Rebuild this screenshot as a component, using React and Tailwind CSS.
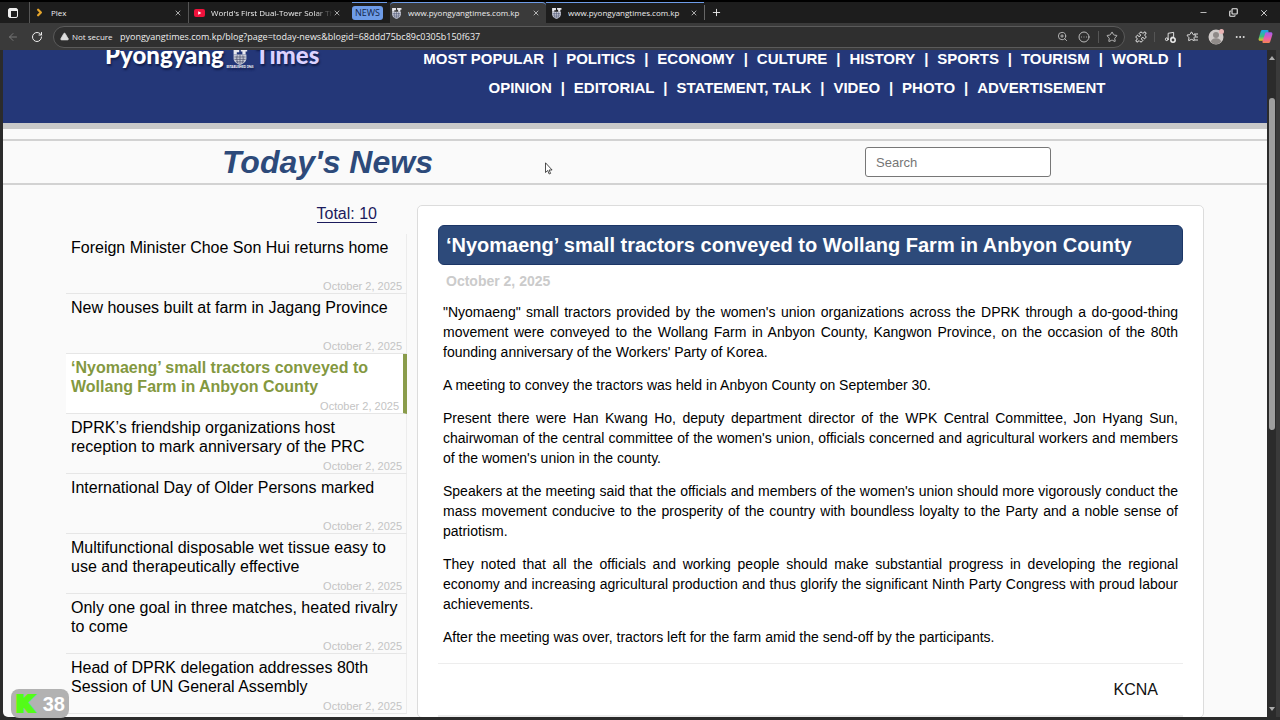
import { useState } from "react"
import {
  ArrowLeft, RotateCw, TriangleAlert, ZoomIn, CircleEllipsis, Star, Puzzle, Music, Ellipsis,
  X, Plus, Minus, Copy, ChevronRight,
} from "lucide-react"

const NAV_ROWS = [
  ["MOST POPULAR", "POLITICS", "ECONOMY", "CULTURE", "HISTORY", "SPORTS", "TOURISM", "WORLD"],
  ["OPINION", "EDITORIAL", "STATEMENT, TALK", "VIDEO", "PHOTO", "ADVERTISEMENT"],
]

const NEWS = [
  "Foreign Minister Choe Son Hui returns home",
  "New houses built at farm in Jagang Province",
  "‘Nyomaeng’ small tractors conveyed to Wollang Farm in Anbyon County",
  "DPRK’s friendship organizations host reception to mark anniversary of the PRC",
  "International Day of Older Persons marked",
  "Multifunctional disposable wet tissue easy to use and therapeutically effective",
  "Only one goal in three matches, heated rivalry to come",
  "Head of DPRK delegation addresses 80th Session of UN General Assembly",
]

const PARAGRAPHS = [
  "\"Nyomaeng\" small tractors provided by the women's union organizations across the DPRK through a do-good-thing movement were conveyed to the Wollang Farm in Anbyon County, Kangwon Province, on the occasion of the 80th founding anniversary of the Workers' Party of Korea.",
  "A meeting to convey the tractors was held in Anbyon County on September 30.",
  "Present there were Han Kwang Ho, deputy department director of the WPK Central Committee, Jon Hyang Sun, chairwoman of the central committee of the women's union, officials concerned and agricultural workers and members of the women's union in the county.",
  "Speakers at the meeting said that the officials and members of the women's union should more vigorously conduct the mass movement conducive to the prosperity of the country with boundless loyalty to the Party and a noble sense of patriotism.",
  "They noted that all the officials and working people should make substantial progress in developing the regional economy and increasing agricultural production and thus glorify the significant Ninth Party Congress with proud labour achievements.",
  "After the meeting was over, tractors left for the farm amid the send-off by the participants.",
]

const DATE = "October 2, 2025"

function Crest({ className }) {
  return (
    <svg viewBox="0 0 20 20" className={className} aria-hidden="true">
      <path d="M2 0h7v4H6v3H2zM11 0h8v3h-2v4h-4V3h-2z" fill="#e8e8ee" />
      <path d="M2 7h16v5c0 4-4 7-8 8-4-1-8-4-8-8z" fill="#c9cbd6" />
      <path d="M3 10h14M3 13h14M5 16h10M10 7v12M6.500 8c-1 4-.5 7 1 10M13.500 8c1 4 .5 7-1 10" stroke="#4a5170" strokeWidth="0.900" fill="none" />
    </svg>
  )
}

function Tab({ icon, title, className, fade }) {
  return (
    <div className={`flex min-w-0 items-center pr-[6px] ${className}`}>
      {icon}
      <span className={`ml-[6px] min-w-0 flex-1 overflow-hidden whitespace-nowrap ${fade ? "mask-r-from-85%" : ""}`}>{title}</span>
      <button aria-label={`Close ${title}`}><X className="h-[8px] w-[8px]" /></button>
    </div>
  )
}

function TabStrip() {
  return (
    <div className="flex h-[23px] items-stretch border-t-2 border-black bg-[#1d1d1d] text-[8px]">
      <button aria-label="Tab actions" className="flex w-[29px] items-center pl-[8px]">
        <svg viewBox="0 0 10 10" className="h-[10px] w-[10px]">
          <rect x="0.500" y="0.500" width="9" height="9" rx="1.500" fill="none" stroke="#eee" />
          <path d="M1 1h8v2H1zM1 3h2v6H1z" fill="#eee" />
        </svg>
      </button>
      <Tab
        className="w-[159px] border-l border-[#555] pl-[4px]"
        title="Plex"
        icon={<ChevronRight className="h-[11px] w-[11px] text-[#e5a52c]" strokeWidth={5} />}
      />
      <Tab
        className="w-[159px] border-l border-[#555] pl-[5px]"
        title="World's First Dual-Tower Solar Th"
        fade
        icon={
          <svg viewBox="0 0 11 8" className="h-[8px] w-[11px]">
            <rect width="11" height="8" rx="2" fill="#f0123c" />
            <path d="M4.200 2.200v3.600L7.400 4z" fill="#fff" />
          </svg>
        }
      />
      <div className="ml-[5px] flex w-[35px] items-center border-t border-[#6e9ce8]">
        <button className="h-[14px] w-[31px] rounded-[3px] bg-[#6e9ce8] text-center text-[9px] leading-[14px] text-[#13264a]">NEWS</button>
      </div>
      <Tab
        className="ml-[3px] w-[156px] rounded-t border-t border-[#6e9ce8] bg-[#3a3a3a] pl-[1px]"
        title="www.pyongyangtimes.com.kp"
        icon={<Crest className="h-[11px] w-[11px]" />}
      />
      <Tab
        className="w-[158px] border-t border-[#6e9ce8] pl-[5px]"
        title="www.pyongyangtimes.com.kp"
        icon={<Crest className="h-[11px] w-[11px]" />}
      />
      <button aria-label="New tab" className="my-[3px] border-l border-[#666] pl-[6px]">
        <Plus className="h-[11px] w-[11px]" />
      </button>
      <div className="ml-auto flex items-center gap-[21px] pr-[11px]">
        <button aria-label="Minimize"><Minus className="h-[9px] w-[9px]" /></button>
        <button aria-label="Restore"><Copy className="h-[9px] w-[9px] -scale-x-100 rotate-180" strokeWidth={3} /></button>
        <button aria-label="Close window"><X className="h-[10px] w-[10px]" /></button>
      </div>
    </div>
  )
}

function CopilotLogo() {
  return (
    <svg viewBox="0 0 16 16" className="h-[15px] w-[15px]">
      <defs>
        <linearGradient id="cpLeft" x1="0" y1="0" x2="0" y2="1">
          <stop offset="0" stopColor="#1fa2f0" />
          <stop offset="0.600" stopColor="#3cc07a" />
          <stop offset="1" stopColor="#f0c52a" />
        </linearGradient>
        <linearGradient id="cpRight" x1="0" y1="0" x2="0" y2="1">
          <stop offset="0" stopColor="#a35cf0" />
          <stop offset="0.600" stopColor="#ee5fa5" />
          <stop offset="1" stopColor="#f5854e" />
        </linearGradient>
      </defs>
      <path d="M5 1h5c1 0 1.500.8 1.200 1.800L8.500 11c-.4 1.200-1 1.600-2 1.600H2.400C1 12.600.3 11.500.7 10L3 2.500C3.300 1.500 4 1 5 1z" fill="url(#cpLeft)" />
      <path d="M11 15H6c-1 0-1.500-.8-1.200-1.800L7.500 5c.4-1.200 1-1.600 2-1.600h4.100c1.400 0 2.100 1.100 1.700 2.600L13 13.500c-.3 1-1 1.500-2 1.500z" fill="url(#cpRight)" />
    </svg>
  )
}

function Toolbar() {
  return (
    <div className="flex h-[27px] items-center bg-[#3a3a3a] text-[8px]">
      <button aria-label="Back" className="ml-[7px] text-[#777]"><ArrowLeft className="h-[12px] w-[12px]" /></button>
      <button aria-label="Refresh" className="ml-[12px]"><RotateCw className="h-[12px] w-[12px]" /></button>
      <div className="ml-[10px] flex h-[22px] flex-1 items-center rounded-full border border-[#5a5a5a] bg-[#2f2f2f] pr-[6px] pl-[6px]">
        <TriangleAlert className="h-[9px] w-[9px] fill-[#ddd] text-[#ddd]" />
        <label htmlFor="address" className="ml-[3px] w-[48px] whitespace-nowrap">Not secure</label>
        <input
          id="address"
          className="min-w-0 flex-1 text-[9px] outline-none"
          defaultValue="pyongyangtimes.com.kp/blog?page=today-news&blogid=68ddd75bc89c0305b150f637"
        />
        <div className="flex items-center text-[#bbb]">
          <button aria-label="Zoom"><ZoomIn className="h-[11px] w-[11px]" /></button>
          <button aria-label="Page actions" className="ml-[10px]"><CircleEllipsis className="h-[12px] w-[12px]" /></button>
          <span className="ml-[8px] h-[12px] w-px bg-[#555]" />
          <button aria-label="Add to favorites" className="ml-[7px]"><Star className="h-[12px] w-[12px]" /></button>
        </div>
      </div>
      <div className="flex items-center pr-[7px] pl-[10px]">
        <button aria-label="Extensions"><Puzzle className="h-[12px] w-[12px]" /></button>
        <span className="ml-[7px] h-[10px] w-px bg-[#555]" />
        <button aria-label="Media" className="relative ml-[9px]">
          <Music className="h-[11px] w-[11px]" />
          <svg viewBox="0 0 6 6" className="absolute right-[-1px] bottom-[-1px] h-[6px] w-[6px]">
            <circle cx="3" cy="3" r="2.200" fill="#3a3a3a" stroke="#eee" strokeWidth="1.500" />
          </svg>
        </button>
        <button aria-label="Favorites" className="relative ml-[11px] flex">
          <Star className="h-[11px] w-[11px]" />
          <svg viewBox="0 0 4 8" className="absolute top-[2px] left-[8px] h-[8px] w-[4px]">
            <path d="M0 1h4M1 4h3M1 7h3" stroke="#ddd" />
          </svg>
        </button>
        <button aria-label="Profile" className="ml-[11px]">
          <svg viewBox="0 0 16 16" className="h-[16px] w-[16px]">
            <circle cx="8" cy="8" r="7.500" fill="#cfcac8" />
            <circle cx="8" cy="6" r="3" fill="#8f8a88" />
            <path d="M3 13c0-5 10-5 10 0-3 3-7 3-10 0z" fill="#8f8a88" />
            <circle cx="13.500" cy="2.500" r="2.500" fill="#e8b4b4" />
          </svg>
        </button>
        <button aria-label="Settings" className="ml-[10px]"><Ellipsis className="h-[12px] w-[12px]" /></button>
        <button aria-label="Copilot" className="ml-[12px]"><CopilotLogo /></button>
      </div>
    </div>
  )
}

function SiteHeader() {
  return (
    <header className="flex h-[79px] shrink-0 items-end overflow-hidden border-b-[6px] border-[#c9c9c9] bg-[#243778] pr-[71px] pl-[102px] text-white">
      <a href="#home" className="flex w-[219px] items-end pb-[54px] font-['Lato'] text-[24px] leading-[28px] font-black [text-shadow:1px_2px_2px_#111c4a]">
        <span className="w-[120px]">Pyongyang</span>
        <span className="flex w-[30px] flex-col items-center">
          <Crest className="h-[18px] w-[16px]" />
          <span className="text-[3px] leading-[3px] whitespace-nowrap">ESTABLISHED 1965</span>
        </span>
        <span className="text-[#dcd2ff]">Times</span>
      </a>
      <nav className="ml-[85px] flex flex-1 flex-col items-center pb-[21px] text-[15px] leading-[29px] font-bold">
        {NAV_ROWS.map((row, r) => (
          <ul key={r} className="flex last:pr-[11px]">
            {row.map((item, i) => (
              <li key={item} className="flex">
                <a href="#section" className="whitespace-nowrap">{item}</a>
                {(r === 0 || i < row.length - 1) && (
                  <span className={i < row.length - 1 ? "w-[22px] text-center" : "pl-[9px]"}>|</span>
                )}
              </li>
            ))}
          </ul>
        ))}
      </nav>
    </header>
  )
}

function NewsList({ selected, onSelect }) {
  return (
    <aside className="w-[341px] shrink-0 pt-[19px]">
      <div className="pr-[30px] text-right text-[16px] leading-[20px] text-[#1b1b5c]">
        <span className="border-b border-[#1b1b5c] leading-[17px]">Total: 10</span>
      </div>
      <ul className="mt-[10px]">
        {NEWS.map((title, i) => (
          <li key={title}>
            <button
              onClick={() => onSelect(i)}
              className={`flex h-[60px] w-full flex-col border-b border-b-[#e6e6e6] pt-[4px] pl-[5px] text-left ${
                i === selected
                  ? "border-r-4 border-r-[#8a9c4b] bg-white pr-[4px] font-bold text-[#83983f]"
                  : "border-r border-r-[#ececec] pr-[4px] text-black"
              }`}
            >
              <span className="h-[42px] text-[16px] leading-[19px]">{title}</span>
              <span className="self-end text-[11px] leading-[13px] font-normal text-[#c4c4c4]">{DATE}</span>
            </button>
          </li>
        ))}
      </ul>
    </aside>
  )
}

function Article({ title }) {
  return (
    <article className="mt-[20px] ml-[10px] flex-1 rounded-[5px] border border-[#dcdcdc] bg-white px-[20px] pt-[19px]">
      <h2 className="rounded-[6px] border border-[#1c3666] bg-[#2d4a7a] px-[7px] text-[20px] leading-[38px] font-bold text-white">
        {title}
      </h2>
      <div className="mt-[6px] pl-[8px] text-[14px] leading-[20px] font-bold text-[#cbcbcb]">{DATE}</div>
      <div className="mt-[11px] space-y-[13px] border-b border-[#ededed] px-[5px] pb-[16px] text-justify text-[14px] leading-[20px] text-black">
        {PARAGRAPHS.map((p) => <p key={p}>{p}</p>)}
      </div>
      <div className="border-b-2 border-[#ededed] py-[15px] pr-[25px] text-right text-[16px] leading-[21px] text-[#111]">KCNA</div>
    </article>
  )
}

export default function App() {
  const [selected, setSelected] = useState(2)

  return (
    <div className="relative flex h-screen flex-col overflow-hidden bg-[#2b2b2b] font-['Liberation_Sans',sans-serif]">
      <div className="shrink-0 font-['Open_Sans',sans-serif] text-[#eee]">
        <TabStrip />
        <Toolbar />
      </div>

      <div className="flex min-h-0 flex-1 pb-[3px] pl-[3px]">
        <main className="flex min-w-0 flex-1 flex-col overflow-hidden rounded-bl-[5px] bg-[#fafafa]">
          <SiteHeader />
          <div className="mt-[10px] flex shrink-0 items-center justify-between border-y-2 border-[#d2d2d2] py-[6px] pr-[216px] pl-[219px]">
            <h1 className="text-[32px] leading-[28px] font-bold text-[#2d4a7a] italic">Today's News</h1>
            <input
              aria-label="Search"
              placeholder="Search"
              className="h-[30px] w-[186px] rounded-[3px] border border-[#777] bg-white px-[10px] text-[13px] placeholder:text-[#757575]"
            />
          </div>
          <div className="flex px-[63px]">
            <NewsList selected={selected} onSelect={setSelected} />
            <Article title={NEWS[2]} />
          </div>
        </main>

        {/* scrollbar */}
        <div className="flex w-[13px] shrink-0 flex-col border-r-4 border-[#3a3a3a] pt-[6px] pl-[2px]">
          <svg viewBox="0 0 6 4" className="h-[4px] w-[6px]"><path d="M0 4l3-4 3 4z" fill="#aaa" /></svg>
          <div className="mt-[38px] h-[332px] w-[6px] rounded-full bg-[#9e9e9e]" />
          <svg viewBox="0 0 6 4" className="mt-auto mb-[6px] h-[4px] w-[6px]"><path d="M0 0l3 4 3-4z" fill="#aaa" /></svg>
        </div>
      </div>

      {/* stream overlay counter */}
      <div className="absolute bottom-[2px] left-[11px] flex h-[29px] w-[58px] items-center justify-between rounded-[8px] bg-[#b2b2b2] pr-[4px] pl-[6px] font-bold">
        <span className="text-[22px] text-[#53fc18] [-webkit-text-stroke:4px_#53fc18]">K</span>
        <span className="text-[20px] text-white">38</span>
      </div>

      <svg viewBox="0 0 8 13" className="absolute top-[162px] left-[545px] h-[13px] w-[8px]">
        <path d="M0.500 0.800v9.700l2.200-2 1.500 3.500 1.400-.6-1.500-3.400h3z" fill="#fff" stroke="#222" strokeWidth="0.800" />
      </svg>
    </div>
  )
}
